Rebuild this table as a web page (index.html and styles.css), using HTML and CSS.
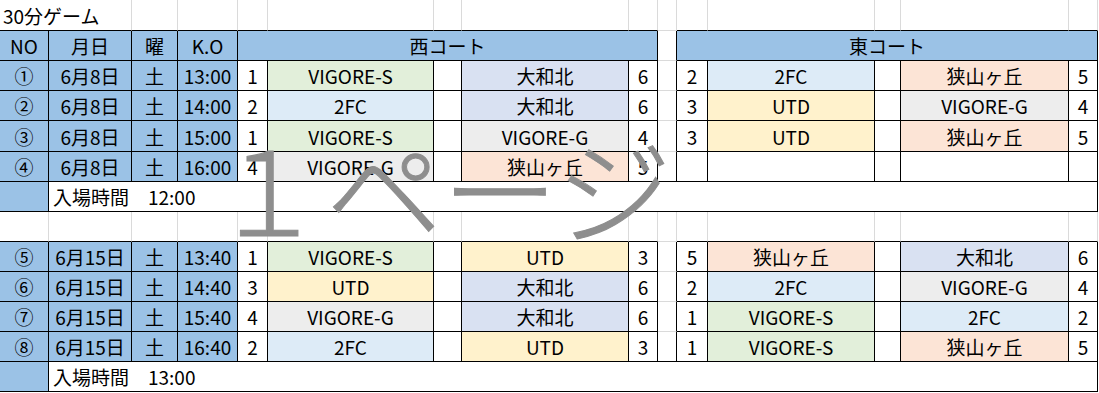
FILE: index.html
```html
<!DOCTYPE html>
<html lang="ja">
<head>
<meta charset="utf-8">
<title>30分ゲーム</title>
<link rel="stylesheet" href="styles.css">
</head>
<body>
<div class="page">
  <div class="sheet">
    <!-- title row -->
    <div class="c top s2 left title">30分ゲーム</div>
    <div class="c top"></div><div class="c top"></div><div class="c top"></div><div class="c top"></div><div class="c top"></div><div class="c top"></div><div class="c top"></div>
    <div class="c top-gap"></div>
    <div class="c top"></div><div class="c top"></div><div class="c top"></div><div class="c top"></div><div class="c top"></div>

    <!-- header row -->
    <div class="c blue">NO</div>
    <div class="c blue">月日</div>
    <div class="c blue">曜</div>
    <div class="c blue">K.O</div>
    <div class="c blue s5">西コート</div>
    <div class="c gap"></div>
    <div class="c blue s5">東コート</div>

    <!-- 1 -->
    <div class="c blue">①</div><div class="c blue">6月8日</div><div class="c blue">土</div><div class="c blue">13:00</div>
    <div class="c">1</div><div class="c vs">VIGORE-S</div><div class="c"></div><div class="c ywk">大和北</div><div class="c">6</div>
    <div class="c gap"></div>
    <div class="c">2</div><div class="c fc">2FC</div><div class="c"></div><div class="c sy">狭山ヶ丘</div><div class="c">5</div>

    <!-- 2 -->
    <div class="c blue">②</div><div class="c blue">6月8日</div><div class="c blue">土</div><div class="c blue">14:00</div>
    <div class="c">2</div><div class="c fc">2FC</div><div class="c"></div><div class="c ywk">大和北</div><div class="c">6</div>
    <div class="c gap"></div>
    <div class="c">3</div><div class="c utd">UTD</div><div class="c"></div><div class="c vg">VIGORE-G</div><div class="c">4</div>

    <!-- 3 -->
    <div class="c blue">③</div><div class="c blue">6月8日</div><div class="c blue">土</div><div class="c blue">15:00</div>
    <div class="c">1</div><div class="c vs">VIGORE-S</div><div class="c"></div><div class="c vg">VIGORE-G</div><div class="c">4</div>
    <div class="c gap"></div>
    <div class="c">3</div><div class="c utd">UTD</div><div class="c"></div><div class="c sy">狭山ヶ丘</div><div class="c">5</div>

    <!-- 4 -->
    <div class="c blue">④</div><div class="c blue">6月8日</div><div class="c blue">土</div><div class="c blue">16:00</div>
    <div class="c">4</div><div class="c vg">VIGORE-G</div><div class="c"></div><div class="c sy">狭山ヶ丘</div><div class="c">5</div>
    <div class="c gap-last"></div>
    <div class="c"></div><div class="c"></div><div class="c"></div><div class="c"></div><div class="c"></div>

    <!-- entry -->
    <div class="c blue"></div>
    <div class="c s14 left entry">入場時間　12:00</div>

    <!-- blank -->
    <div class="c blank"></div><div class="c blank"></div><div class="c blank"></div><div class="c blank"></div><div class="c blank"></div><div class="c blank"></div><div class="c blank"></div><div class="c blank"></div><div class="c blank"></div>
    <div class="c top-gap"></div>
    <div class="c blank"></div><div class="c blank"></div><div class="c blank"></div><div class="c blank"></div><div class="c blank"></div>

    <!-- 5 -->
    <div class="c blue">⑤</div><div class="c blue">6月15日</div><div class="c blue">土</div><div class="c blue">13:40</div>
    <div class="c">1</div><div class="c vs">VIGORE-S</div><div class="c"></div><div class="c utd">UTD</div><div class="c">3</div>
    <div class="c gap"></div>
    <div class="c">5</div><div class="c sy">狭山ヶ丘</div><div class="c"></div><div class="c ywk">大和北</div><div class="c">6</div>

    <!-- 6 -->
    <div class="c blue">⑥</div><div class="c blue">6月15日</div><div class="c blue">土</div><div class="c blue">14:40</div>
    <div class="c">3</div><div class="c utd">UTD</div><div class="c"></div><div class="c ywk">大和北</div><div class="c">6</div>
    <div class="c gap"></div>
    <div class="c">2</div><div class="c fc">2FC</div><div class="c"></div><div class="c vg">VIGORE-G</div><div class="c">4</div>

    <!-- 7 -->
    <div class="c blue">⑦</div><div class="c blue">6月15日</div><div class="c blue">土</div><div class="c blue">15:40</div>
    <div class="c">4</div><div class="c vg">VIGORE-G</div><div class="c"></div><div class="c ywk">大和北</div><div class="c">6</div>
    <div class="c gap"></div>
    <div class="c">1</div><div class="c vs">VIGORE-S</div><div class="c"></div><div class="c fc">2FC</div><div class="c">2</div>

    <!-- 8 -->
    <div class="c blue">⑧</div><div class="c blue">6月15日</div><div class="c blue">土</div><div class="c blue">16:40</div>
    <div class="c">2</div><div class="c fc">2FC</div><div class="c"></div><div class="c utd">UTD</div><div class="c">3</div>
    <div class="c gap-last"></div>
    <div class="c">1</div><div class="c vs">VIGORE-S</div><div class="c"></div><div class="c sy">狭山ヶ丘</div><div class="c">5</div>

    <!-- entry -->
    <div class="c blue"></div>
    <div class="c s14 left entry">入場時間　13:00</div>
  </div>
  <div class="watermark">１ページ</div>
</div>
</body>
</html>
```

FILE: styles.css
```css
html, body {
  margin: 0;
  padding: 0;
  background: #ffffff;
}

body {
  font-family: "Noto Sans CJK JP", "Noto Sans", sans-serif;
  font-size: 19px;
  color: #000000;
}

.page {
  position: relative;
  width: 1099px;
  height: 393px;
  overflow: hidden;
}

.sheet {
  display: grid;
  grid-template-columns: 49px 83px 46px 60px 30px 166px 28px 167px 29px 19px 31px 167px 26px 168px 29px;
  grid-template-rows: 31px 30px 30px 30px 31px 30px 30px 30px 30px 30px 30px 30px 30px;
}

.c {
  box-sizing: border-box;
  display: flex;
  align-items: center;
  justify-content: center;
  white-space: nowrap;
  line-height: 1;
  border-right: 1px solid #000000;
  border-bottom: 1px solid #000000;
  background: #ffffff;
}

.left {
  justify-content: flex-start;
}

.s2 { grid-column: span 2; }
.s5 { grid-column: span 5; }
.s14 { grid-column: span 14; }

.title {
  padding-left: 3px;
}

.entry {
  padding-left: 4px;
}

/* spreadsheet gridlines */
.top {
  border-right-color: #dadada;
}

.top-gap {
  border-right-color: #dadada;
  border-bottom-color: #dadada;
}

.blank {
  border-right-color: #dadada;
}

.gap {
  border-bottom-color: #dadada;
}

.gap-last {
  border-bottom-color: #000000;
}

/* fills */
.blue { background: #9bc2e6; }
.vs { background: #e2efda; }
.fc { background: #ddebf7; }
.ywk { background: #d9e1f2; }
.sy { background: #fce4d6; }
.utd { background: #fff2cc; }
.vg { background: #ededed; }

.watermark {
  position: absolute;
  left: 210px;
  top: 127px;
  font-family: "Noto Sans CJK JP", sans-serif;
  font-size: 116px;
  font-weight: 300;
  -webkit-text-stroke: 1px #8e8e8e;
  line-height: 1;
  color: #8e8e8e;
  white-space: nowrap;
  pointer-events: none;
}
```
